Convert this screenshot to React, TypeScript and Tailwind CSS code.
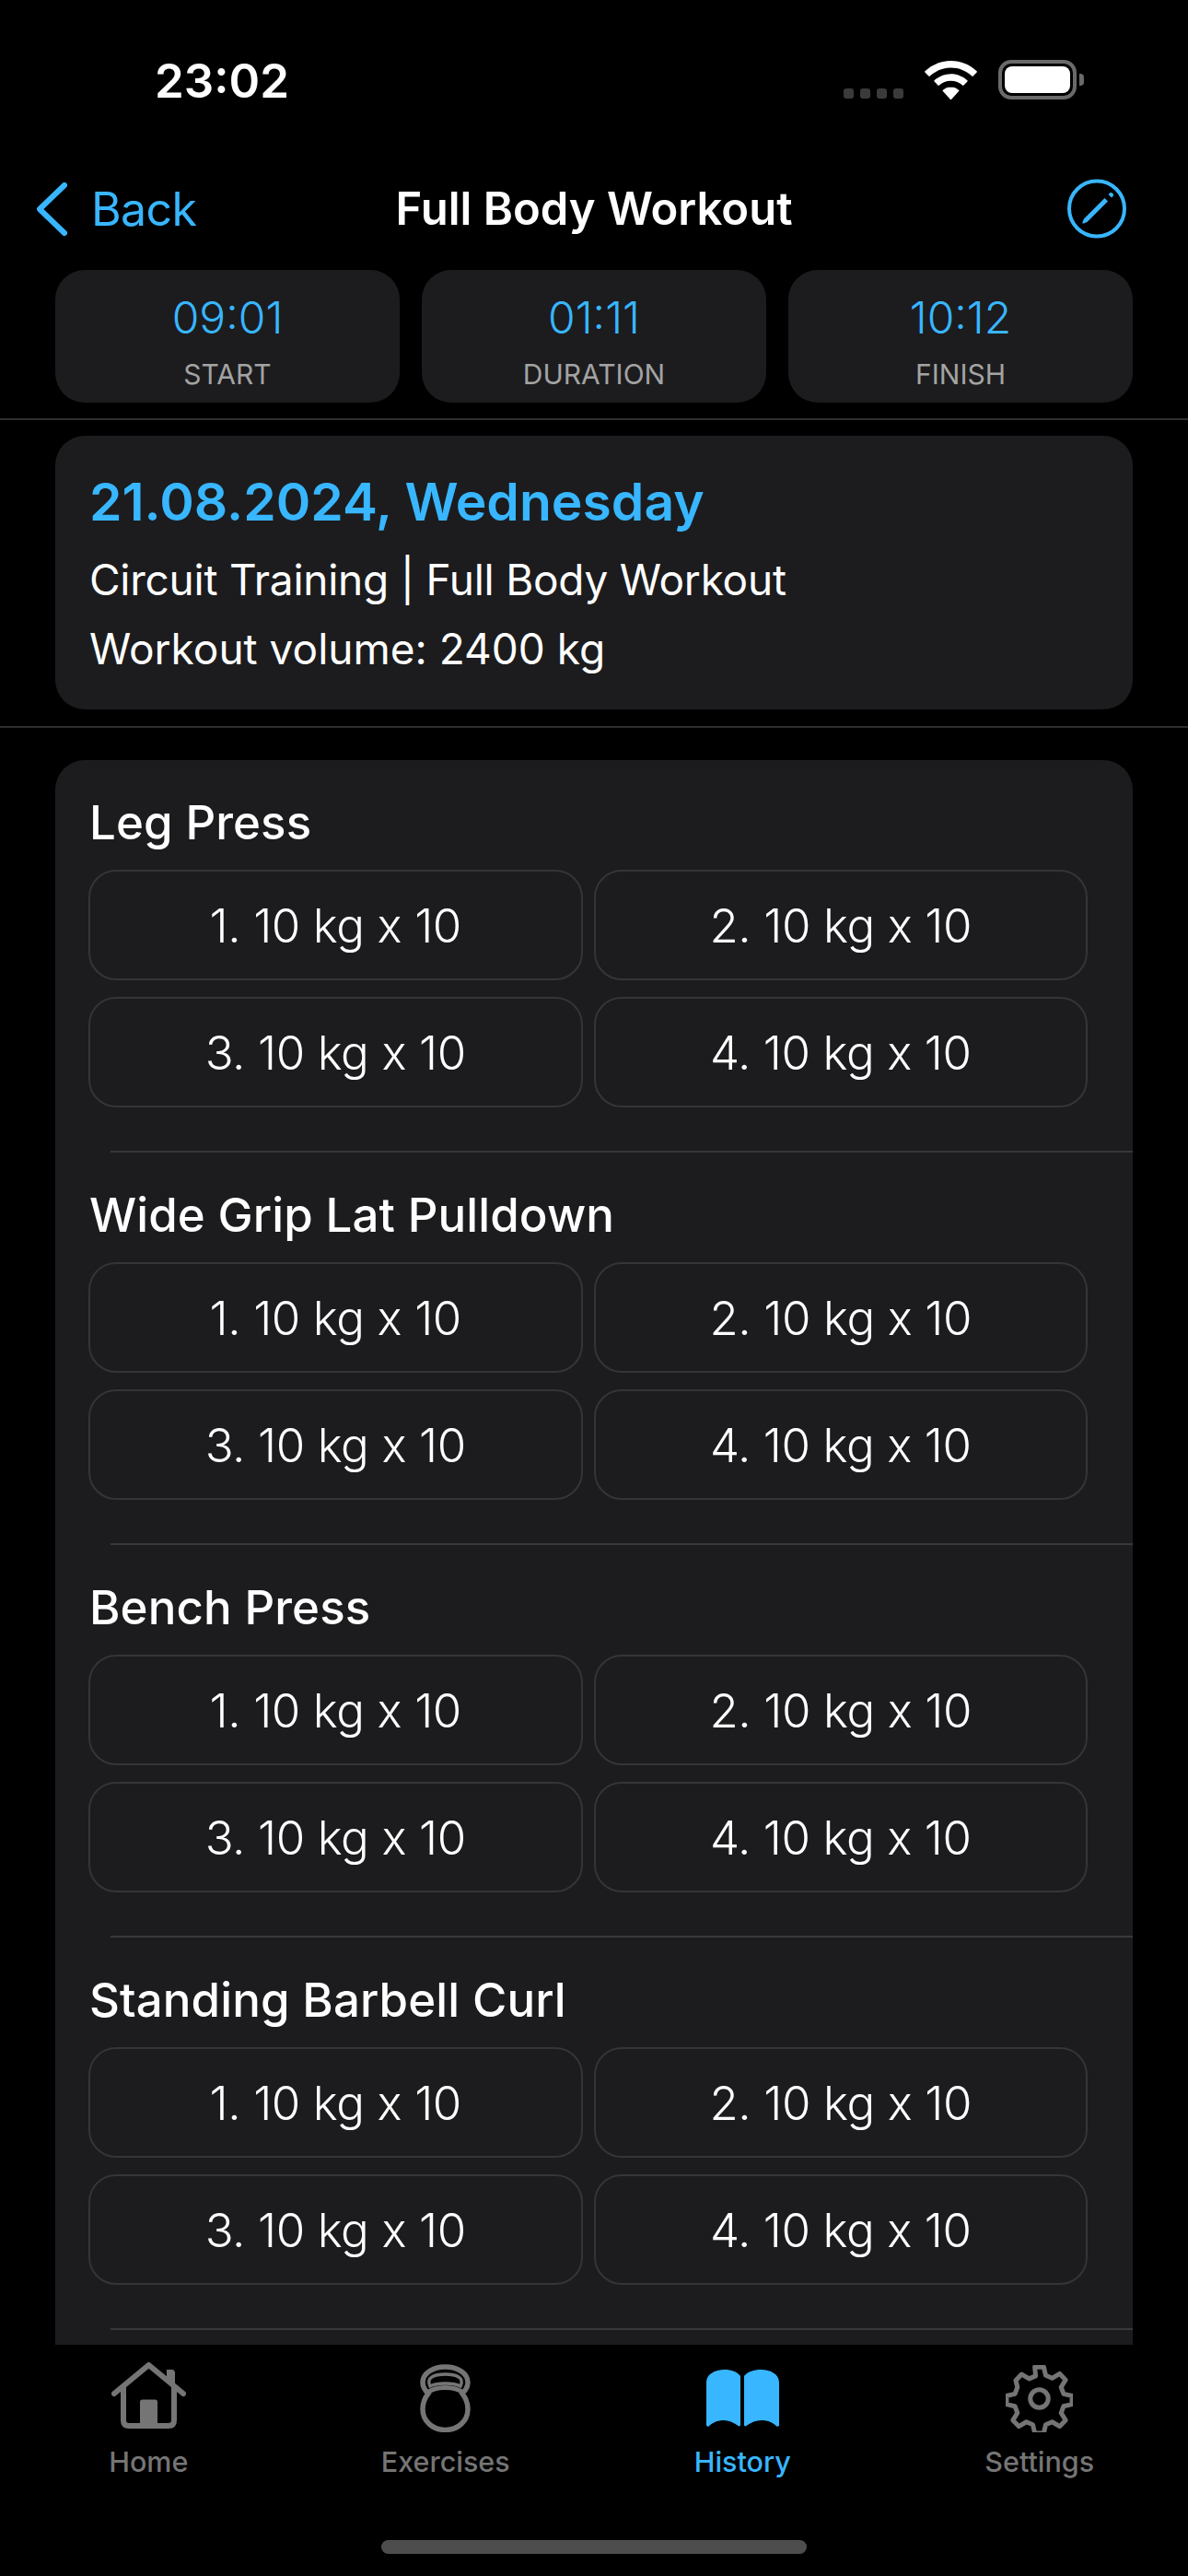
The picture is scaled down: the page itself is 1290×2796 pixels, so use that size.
const exercises = ["Leg Press", "Wide Grip Lat Pulldown", "Bench Press", "Standing Barbell Curl"];
const sets = [1, 2, 3, 4];

const stats = [
  { value: "09:01", label: "START" },
  { value: "01:11", label: "DURATION" },
  { value: "10:12", label: "FINISH" },
];

const StatusIcons = () => (
  <div className="flex items-end">
    <div className="flex gap-[7px] mb-[1px]">
      {sets.map((n) => (
        <div key={n} className="w-[11px] h-[11px] rounded-[3px] bg-[#3a3a3a]" />
      ))}
    </div>
    <svg width="57" height="42" viewBox="0 0 57 42" className="ml-[23px]">
      <path fill="#fff" d="M28.5 0C17.6 0 7.8 4.2.4 11.2c-.4.4-.4 1 0 1.4l3.9 4c.4.4 1 .4 1.4 0C11.7 11 19.7 7.6 28.5 7.6s16.8 3.4 22.8 9c.4.4 1 .4 1.4 0l3.9-4c.4-.4.4-1 0-1.4C49.2 4.2 39.4 0 28.5 0z" />
      <path fill="#fff" d="M28.5 14.2c-6.9 0-13.2 2.7-17.9 7-.4.4-.4 1 0 1.4l3.9 4c.4.4 1 .4 1.4 0 3.3-3 7.7-4.8 12.6-4.8s9.3 1.8 12.6 4.8c.4.4 1 .4 1.4 0l3.9-4c.4-.4.4-1 0-1.4-4.7-4.3-11-7-17.9-7z" />
      <path fill="#fff" d="M28.5 28.4c-3.3 0-6.3 1.2-8.6 3.3-.4.4-.4 1 0 1.4l7.9 8.6c.4.4 1 .4 1.4 0l7.9-8.6c.4-.4.4-1 0-1.4-2.3-2.1-5.3-3.3-8.6-3.3z" />
    </svg>
    <div className="flex items-center ml-[23px]">
      <div className="w-[85px] h-[43px] rounded-[14px] border-[4px] border-[#6a6a6a] p-[3px]">
        <div className="w-full h-full rounded-[8px] bg-white" />
      </div>
      <div className="w-[5px] h-[13px] ml-[3px] rounded-r-[4px] bg-[#6a6a6a]" />
    </div>
  </div>
);

const HomeIcon = () => (
  <svg width="81" height="72" viewBox="0 0 81 72" fill="none" stroke="#757575">
    <path strokeWidth="6" strokeLinecap="round" strokeLinejoin="round" d="M3 34 40.500 3 78 34" />
    <path strokeWidth="6" strokeLinejoin="round" d="M13 27v36c0 4 2 6 6 6h43c4 0 6-2 6-6V27" />
    <path fill="#757575" stroke="none" d="M60 8h6c1.500 0 3 1.500 3 3v17l-9-7zM31 43c0-1.500 1-2.600 2.600-2.600h13.800c1.600 0 2.600 1.100 2.600 2.600v26H31z" />
  </svg>
);

const KettlebellIcon = () => (
  <svg width="55" height="74" viewBox="0 0 55 74" fill="none" stroke="#757575" strokeWidth="5.500">
    <path d="M27.500 3C14 3 3 10 3 20c0 5 3 9 6 12-4 5-6 11-6 17 0 13 11 22.500 24.500 22.500S52 62 52 49c0-6-2-12-6-17 3-3 6-7 6-12C52 10 41 3 27.500 3z" />
    <path strokeWidth="3.500" d="M11 24c-2-4-1.500-8 2-10 4-2.500 9-3 14.500-3s10.500.5 14.500 3c3.500 2 4 6 2 10-4-2-10-3-16.500-3S15 22 11 24z" />
    <path strokeWidth="5" d="M8 31c5-4 12-5.500 19.500-5.500S42 27 47 31" />
  </svg>
);

const BookIcon = () => (
  <svg width="79" height="62" viewBox="0 0 79 62" fill="#38b6ff">
    <path d="M37 7v53c0 1-1 1.800-2 1.200C29 57 24 55 19 55 13 55 7 57 3 61.200 1.800 62.300 0 61.500 0 60V14C0 5 9 0 20 0c7 0 13 2 17 7zM41 7v53c0 1 1 1.800 2 1.200C49 57 54 55 60 55c6 0 12 2 16 6.200 1.200 1.100 3 .3 3-1.200V14C79 5 70 0 59 0c-7 0-14 2-18 7z" />
  </svg>
);

const GearIcon = () => (
  <svg width="73" height="73" viewBox="0 0 24 24" fill="none" stroke="#757575" strokeWidth="1.650" strokeLinejoin="round">
    <path d="M10.400 1.200h3.200l.7 3 2.300 1 2.700-1.600 2.100 2.200-1.600 2.600.9 2.400 3 .7v3l-3 .7-.9 2.400 1.600 2.600-2.100 2.200-2.700-1.600-2.300 1-.7 3h-3.200l-.7-3-2.300-1-2.700 1.600-2.100-2.200 1.600-2.600-.9-2.400-3-.7v-3l3-.7.9-2.400L3.600 6l2.100-2.200 2.700 1.600 2.300-1z" transform="translate(0 -.5)" />
    <circle cx="12" cy="12" r="3.200" />
  </svg>
);

const tabs = [
  { label: "Home", icon: <HomeIcon />, box: "pt-[19px]", active: false },
  { label: "Exercises", icon: <KettlebellIcon />, box: "pt-[21px]", active: false },
  { label: "History", icon: <BookIcon />, box: "pt-[27px]", active: true },
  { label: "Settings", icon: <GearIcon />, box: "pt-[22px]", active: false },
];

export default function App() {
  return (
    <div className="w-[1290px] h-[2796px] bg-black text-white flex flex-col overflow-hidden font-['Inter',sans-serif]">
      {/* status bar */}
      <div className="h-[180px] shrink-0 pl-[168px] pr-[113px] pt-[61px] flex justify-between items-start">
        <span className="text-[51px] leading-[54px] font-semibold">23:02</span>
        <div className="pt-[4px]">
          <StatusIcons />
        </div>
      </div>

      {/* nav bar */}
      <div className="h-[113px] shrink-0 pl-[40px] pr-[67px] relative flex items-center justify-between pb-[20px]">
        <div className="flex items-center text-[#38b6ff]">
          <svg width="36" height="58" viewBox="0 0 36 58" fill="none" stroke="#38b6ff" strokeWidth="6" strokeLinecap="round" strokeLinejoin="round">
            <path d="M30 3 3 29l27 26" />
          </svg>
          <span className="ml-[23px] text-[50px] leading-[60px] tracking-[-0.6px]">Back</span>
        </div>
        <span className="absolute left-0 right-0 top-[17px] text-center text-[49px] leading-[60px] font-semibold">Full Body Workout</span>
        <svg width="64" height="65" viewBox="0 0 64 65" fill="none">
          <circle cx="32" cy="32.500" r="30" stroke="#38b6ff" strokeWidth="4" />
          <path fill="#38b6ff" d="M40.500 21 44 24.500 22 46.500c-1 1-5 2.500-5.500 2-.5-.5 1-4.500 2-5.500z" />
          <path fill="#38b6ff" d="M46 15.500c.8-.8 2-.8 2.700 0l.8.8c.8.8.8 2 0 2.700l-1.500 1.500-3.500-3.500z" />
        </svg>
      </div>

      {/* start / duration / finish */}
      <div className="shrink-0 grid grid-cols-3 gap-[24px] px-[60px]">
        {stats.map((s) => (
          <div key={s.label} className="h-[144px] rounded-[32px] bg-[#1c1c1e] flex flex-col items-center pt-[25px]">
            <span className="text-[#38b6ff] text-[48px] leading-[54px] font-[350]">{s.value}</span>
            <span className="mt-[16px] text-[#a3a3a3] text-[30px] leading-[36px]">{s.label}</span>
          </div>
        ))}
      </div>

      <div className="shrink-0 h-[2px] mt-[17px] bg-[#2e2e2e]" />

      {/* workout summary */}
      <div className="shrink-0 mx-[60px] mt-[17px] h-[297px] rounded-[32px] bg-[#1c1c1e] px-[37px] pt-[37px]">
        <div className="text-[#38b6ff] text-[57px] leading-[70px] font-semibold">21.08.2024, Wednesday</div>
        <div className="mt-[19px] text-[46px] leading-[60px] tracking-[-0.25px]">Circuit Training | Full Body Workout</div>
        <div className="mt-[15px] text-[46px] leading-[60px]">Workout volume: 2400 kg</div>
      </div>

      <div className="shrink-0 h-[2px] mt-[18px] bg-[#2e2e2e]" />

      {/* exercise list */}
      <div className="flex-1 min-h-0 mx-[60px] mt-[35px] rounded-t-[32px] bg-[#1c1c1e] overflow-hidden">
        {exercises.map((name) => (
          <div key={name} className="h-[426px] pt-[37px] flex flex-col">
            <div className="pl-[37px] text-[51px] leading-[62px] font-medium tracking-[0.1px]">{name}</div>
            <div className="ml-[36px] mt-[20px] w-[1085px] grid grid-cols-2 gap-x-[12px] gap-y-[18px]">
              {sets.map((n) => (
                <div key={n} className="h-[120px] pt-[2px] rounded-[30px] border-2 border-[#353537] flex items-center justify-center text-[51px] tracking-[-0.4px] font-[350]">
                  {n}. 10 kg x 10
                </div>
              ))}
            </div>
            <div className="mt-auto ml-[60px] h-[2px] bg-[#38383a]" />
          </div>
        ))}
      </div>

      {/* tab bar */}
      <div className="h-[251px] shrink-0 grid grid-cols-4 relative">
        {tabs.map((t) => (
          <div key={t.label} className="flex flex-col items-center">
            <div className={`h-[109px] ${t.box}`}>{t.icon}</div>
            <span className={`text-[30.5px] leading-[36px] font-medium ${t.active ? "text-[#38b6ff]" : "text-[#757575]"}`}>{t.label}</span>
          </div>
        ))}
        <div className="absolute left-[414px] top-[212px] w-[462px] h-[15px] rounded-full bg-[#4d4d4d]" />
      </div>
    </div>
  );
}
